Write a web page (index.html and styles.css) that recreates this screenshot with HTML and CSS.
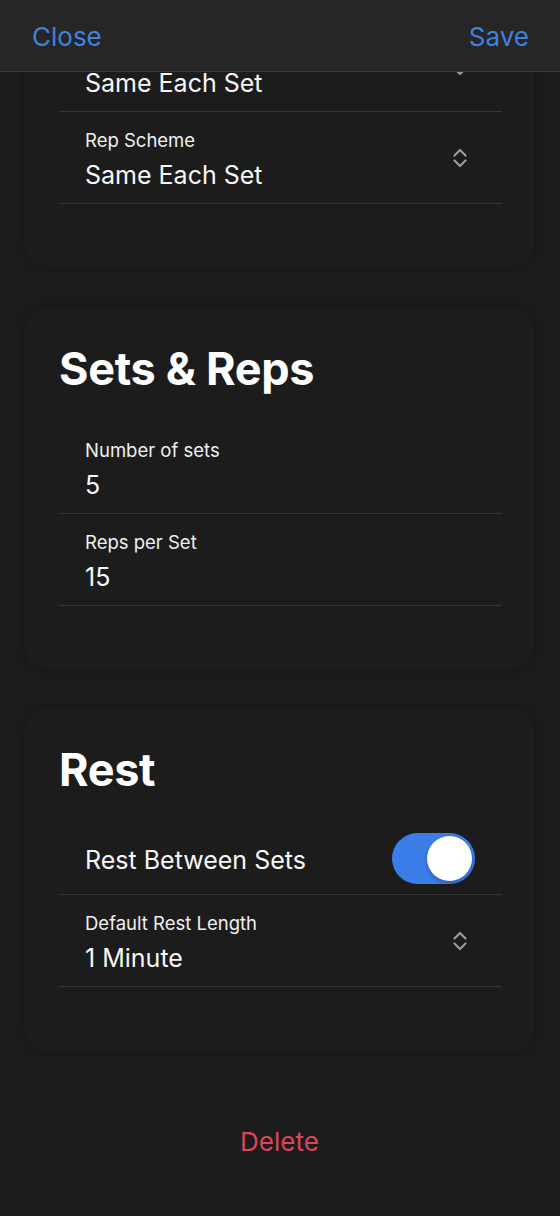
FILE: index.html
```html
<!DOCTYPE html>
<html>
<head>
<meta charset="utf-8">
<link rel="stylesheet" href="styles.css">
</head>
<body>
<div class="screen">
  <header class="navbar">
    <span class="nav-btn">Close</span>
    <span class="nav-btn">Save</span>
  </header>
  <main class="content">
    <section class="card card-first">
      <div class="row picker">
        <div class="texts">
          <div class="label-spacer"></div>
          <div class="value">Same Each Set</div>
        </div>
        <svg class="chev" viewBox="0 0 16 22"><path d="M2.5 8.5 L8 3 L13.5 8.5 M2.5 13.5 L8 19 L13.5 13.5"/></svg>
      </div>
      <div class="row picker">
        <div class="texts">
          <div class="label">Rep Scheme</div>
          <div class="value">Same Each Set</div>
        </div>
        <svg class="chev" viewBox="0 0 16 22"><path d="M2.5 8.5 L8 3 L13.5 8.5 M2.5 13.5 L8 19 L13.5 13.5"/></svg>
      </div>
    </section>

    <section class="card card-sets">
      <h2 class="title">Sets &amp; Reps</h2>
      <div class="row">
        <div class="texts">
          <div class="label">Number of sets</div>
          <div class="value">5</div>
        </div>
      </div>
      <div class="row">
        <div class="texts">
          <div class="label">Reps per Set</div>
          <div class="value">15</div>
        </div>
      </div>
    </section>

    <section class="card card-rest">
      <h2 class="title">Rest</h2>
      <div class="row toggle-row">
        <div class="toggle-label">Rest Between Sets</div>
        <div class="switch"><div class="knob"></div></div>
      </div>
      <div class="row picker">
        <div class="texts">
          <div class="label">Default Rest Length</div>
          <div class="value">1 Minute</div>
        </div>
        <svg class="chev" viewBox="0 0 16 22"><path d="M2.5 8.5 L8 3 L13.5 8.5 M2.5 13.5 L8 19 L13.5 13.5"/></svg>
      </div>
    </section>

    <div class="delete">Delete</div>
  </main>
</div>
</body>
</html>
```

FILE: styles.css
```css
* { box-sizing: border-box; }
html, body {
  margin: 0;
  padding: 0;
  background: #1c1c1c;
}
body {
  font-family: Inter, "Noto Sans", "Liberation Sans", sans-serif;
  color: #f5f5f5;
  width: 560px;
  height: 1216px;
  overflow: hidden;
}
.screen {
  position: relative;
  width: 560px;
  height: 1216px;
  overflow: hidden;
  background: #1c1c1c;
}
.navbar {
  position: absolute;
  top: 0;
  left: 0;
  right: 0;
  height: 72px;
  background: #262626;
  border-bottom: 1px solid #3a3a3a;
  display: flex;
  justify-content: space-between;
  align-items: center;
  padding: 0 31px 0 32px;
  z-index: 5;
}
.nav-btn {
  color: #3f82dc;
  font-size: 26px;
  line-height: 30px;
  margin-top: 2px;
}
.content {
  display: flex;
  flex-direction: column;
  padding: 0 26px 0 25px;
  margin-top: -19px;
}
.card {
  background: #1c1c1c;
  border-radius: 20px;
  box-shadow: 0 0 10px rgba(0, 0, 0, 0.25);
  padding: 36px 32px 64px 34px;
}
.card-first {
  padding-top: 39px;
  padding-bottom: 63px;
}
.card-sets {
  margin-top: 40px;
  padding-bottom: 64px;
}
.card-rest {
  margin-top: 38px;
  padding-bottom: 65px;
}
.title {
  margin: 0 0 27px;
  font-size: 45px;
  line-height: 52px;
  font-weight: 700;
  letter-spacing: -0.3px;
  color: #ffffff;
}
.row {
  display: flex;
  align-items: center;
  padding: 16px 0 12px 26px;
  border-bottom: 1px solid #363636;
}
.texts {
  flex: 1;
  display: flex;
  flex-direction: column;
  gap: 7px;
}
.label {
  font-size: 18.5px;
  line-height: 24px;
  color: #f0f0f0;
}
.label-spacer {
  height: 24px;
}
.value {
  font-size: 25px;
  line-height: 32px;
  color: #f7f7f7;
}
.chev {
  width: 16px;
  height: 22px;
  margin-right: 34px;
  margin-top: -4px;
  fill: none;
  stroke: #9a9a9a;
  stroke-width: 2.2;
  stroke-linecap: round;
  stroke-linejoin: round;
}
.toggle-row {
  padding: 10px 0 10px 26px;
}
.toggle-label {
  flex: 1;
  font-size: 25px;
  line-height: 32px;
  color: #f7f7f7;
  margin-top: 2px;
}
.switch {
  width: 83px;
  height: 51px;
  border-radius: 26px;
  background: #3b7de9;
  margin-right: 27px;
  display: flex;
  justify-content: flex-end;
  align-items: center;
  padding: 3px;
}
.knob {
  width: 45px;
  height: 45px;
  border-radius: 50%;
  background: #ffffff;
  box-shadow: 0 2px 4px rgba(0, 0, 0, 0.25);
}
.delete {
  text-align: center;
  color: #d9475a;
  font-size: 26px;
  line-height: 32px;
  margin-top: 74px;
}
```
